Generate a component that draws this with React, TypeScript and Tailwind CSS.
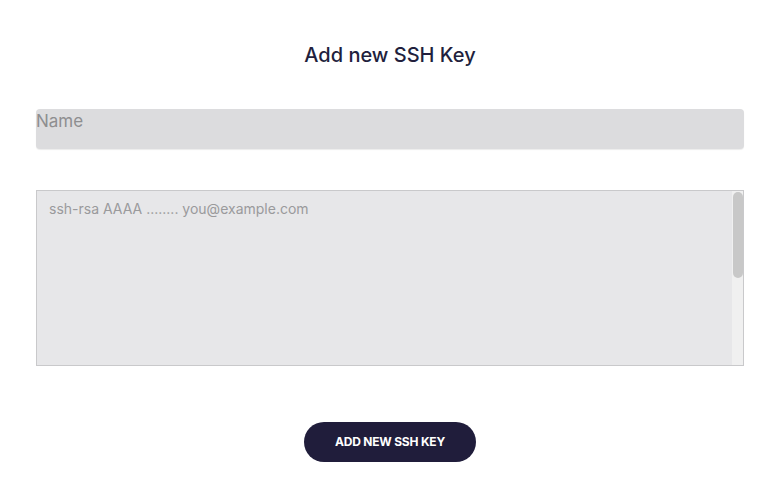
import React from 'react'

export default function App() {
  return (
    <div
      className="min-h-[503px] w-full bg-white pl-[36px] pr-[37px] pt-[40px]"
      style={{ fontFamily: 'Inter, "Open Sans", sans-serif' }}
    >
      <h1 className="text-center text-[20px] leading-[30px] font-medium text-[#221f3d]">
        Add new SSH Key
      </h1>

      <input
        type="text"
        placeholder="Name"
        className="mt-[39px] block h-[40px] w-full rounded-[4px] bg-[#dcdcde] p-0 pb-[16px] text-[17px] leading-6 text-[#333] shadow-[0_1px_1px_rgba(0,0,0,0.08)] outline-none placeholder:text-[#8e8e90]"
      />

      <div className="relative mt-[41px]">
        <textarea
          placeholder="ssh-rsa AAAA ........ you@example.com"
          className="block h-[176px] w-full resize-none border border-[#c9c9cb] bg-[#e7e7e9] px-[12px] pt-[8px] text-[14px] leading-5 text-[#333] outline-none placeholder:text-[#9a9a9c]"
        />
        {/* scrollbar */}
        <div className="pointer-events-none absolute top-[1px] right-[1px] bottom-[1px] w-[11px] bg-[#f0f0f0]">
          <div className="mx-auto mt-[1px] h-[86px] w-[10px] rounded-full bg-[#c8c8c8]" />
        </div>
      </div>

      <div className="mt-[56px] flex justify-center">
        <button className="h-[40px] w-[172px] rounded-full bg-[#201d3b] text-[12px] font-bold tracking-[-0.2px] text-white uppercase">
          Add new SSH Key
        </button>
      </div>
    </div>
  )
}
